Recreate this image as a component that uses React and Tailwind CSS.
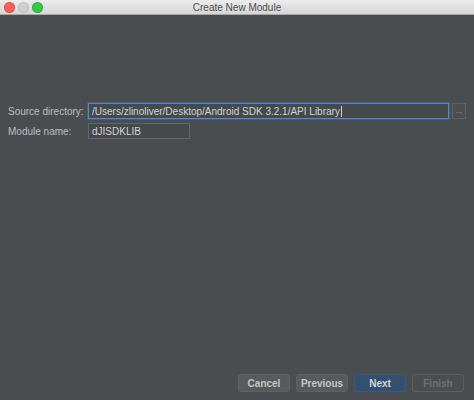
import React from 'react';

const Button = ({ children, primary, disabled }) => (
  <div
    className={
      'flex h-[18px] w-[52px] items-center justify-center rounded-[3px] border text-[10px] font-bold ' +
      (primary
        ? 'border-[#3d5875] bg-[#35506e] text-[#d4d8dc]'
        : disabled
        ? 'border-[#5c5f61] bg-[#4b4e50] text-[#6e7173]'
        : 'border-[#5e6163] bg-[#585b5d] text-[#c4c6c8]')
    }
  >
    {children}
  </div>
);

export default function App() {
  return (
    <div
      className="flex h-[400px] w-[474px] flex-col overflow-hidden bg-[#4a4d50]"
      style={{ fontFamily: '"Liberation Sans", "DejaVu Sans", sans-serif' }}
    >
      <div className="relative flex h-[15px] items-center border-b border-[#a9a9a9] bg-gradient-to-b from-[#ececec] to-[#d6d6d6]">
        <div className="flex gap-[5px] pl-[5px]">
          <span className="h-[9px] w-[9px] rounded-full bg-[#fc605b] ring-1 ring-[#de4a44]" />
          <span className="h-[9px] w-[9px] rounded-full bg-[#cfcfcf] ring-1 ring-[#bdbdbd]" />
          <span className="h-[9px] w-[9px] rounded-full bg-[#34c84a] ring-1 ring-[#27aa37]" />
        </div>
        <div className="absolute inset-0 flex items-center justify-center text-[10px] text-[#4d4d4d]">
          Create New Module
        </div>
      </div>

      <div className="flex flex-1 flex-col px-[8px] pt-[88px]">
        <div className="flex items-center">
          <div className="w-[80px] whitespace-nowrap text-[10px] text-[#bcbec0]">Source directory:</div>
          <div className="flex h-[16px] w-[361px] items-center whitespace-nowrap border border-[#5b8ab8] bg-[#45494b] px-[3px] text-[10px] text-[#d2d4d6] shadow-[0_0_0_1px_#3f5f80]">
            /Users/zlinoliver/Desktop/Android SDK 3.2.1/API Library
            <span className="ml-[1px] h-[11px] w-px bg-[#d0d0d0]" />
          </div>
          <div className="ml-[3px] flex h-[16px] w-[14px] items-center justify-center border border-[#5e6163] bg-[#4c4f51] text-[8px] leading-none text-[#a0a2a4]">
            ...
          </div>
        </div>
        <div className="mt-[4px] flex items-center">
          <div className="w-[80px] whitespace-nowrap text-[10px] text-[#bcbec0]">Module name:</div>
          <div className="flex h-[16px] w-[102px] items-center border border-[#636669] bg-[#45494b] px-[3px] text-[10px] text-[#d2d4d6]">
            dJISDKLIB
          </div>
        </div>

        <div className="mt-auto mb-[8px] flex justify-end gap-[6px] pr-[2px]">
          <Button>Cancel</Button>
          <Button>Previous</Button>
          <Button primary>Next</Button>
          <Button disabled>Finish</Button>
        </div>
      </div>
    </div>
  );
}
